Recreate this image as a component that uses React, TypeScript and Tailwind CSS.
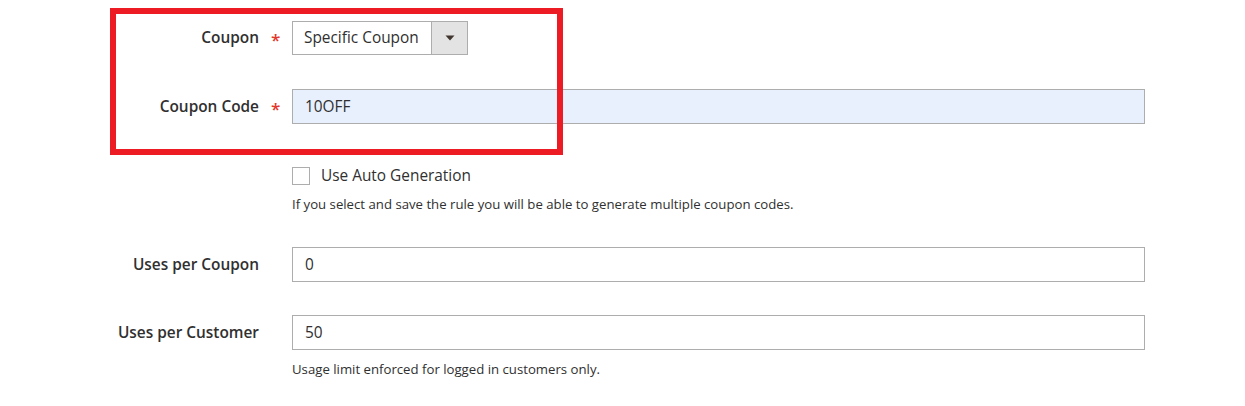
import React from "react";

type FieldRowProps = {
    label: string;
    required?: boolean;
    children: React.ReactNode;
    className?: string;
};

function FieldRow({ label, required, children, className = "" }: FieldRowProps) {
    return (
        <div className={`flex items-center ${className}`}>
            <div className="w-[259px] text-right text-[15.4px] font-semibold text-[#303030] shrink-0">
                {label}
            </div>
            <div className="w-[33px] shrink-0 pl-[12px] text-[17px] font-semibold text-[#e2372a] leading-none pt-[3px]">
                {required ? "*" : ""}
            </div>
            {children}
        </div>
    );
}

function TextInput({ value, autofill }: { value: string; autofill?: boolean }) {
    return (
        <input
            type="text"
            defaultValue={value}
            className={`w-[853px] h-[35px] border border-[#adadad] px-[12px] text-[15.4px] text-[#303030] outline-none ${
                autofill ? "bg-[#e8f0fe]" : "bg-white"
            }`}
        />
    );
}

export default function App() {
    return (
        <div
            className="relative w-[1245px] h-[406px] bg-white overflow-hidden"
            style={{ fontFamily: '"Open Sans", "Liberation Sans", sans-serif' }}
        >
            <div className="pt-[21px]">
                <FieldRow label="Coupon" required>
                    <div className="flex w-[176px] h-[34px] border border-[#adadad] bg-white">
                        <div className="flex-1 flex items-center pl-[11px] text-[15.4px] text-[#303030]">
                            Specific Coupon
                        </div>
                        <div className="w-[36px] flex items-center justify-center bg-[#e3e3e3] border-l border-[#adadad]">
                            <svg width="10" height="6" viewBox="0 0 10 6">
                                <path d="M0.5 0.5 L9.5 0.5 L5 5.5 Z" fill="#41362f" />
                            </svg>
                        </div>
                    </div>
                </FieldRow>

                <FieldRow label="Coupon Code" required className="mt-[34px]">
                    <TextInput value="10OFF" autofill />
                </FieldRow>

                <div className="pl-[292px] mt-[43px]">
                    <label className="flex items-center gap-[11px] h-[18px]">
                        <span className="w-[18px] h-[18px] border border-[#adadad] bg-white shrink-0" />
                        <span className="text-[15.4px] leading-[18px] text-[#303030]">Use Auto Generation</span>
                    </label>
                    <p className="mt-[10px] text-[13.2px] leading-[18px] text-[#303030]">
                        If you select and save the rule you will be able to generate multiple coupon codes.
                    </p>
                </div>

                <FieldRow label="Uses per Coupon" className="mt-[34px]">
                    <TextInput value="0" />
                </FieldRow>

                <FieldRow label="Uses per Customer" className="mt-[33px]">
                    <TextInput value="50" />
                </FieldRow>

                <p className="pl-[292px] mt-[10px] text-[13.2px] leading-[18px] text-[#303030]">
                    Usage limit enforced for logged in customers only.
                </p>
            </div>

            {/* annotation box */}
            <div className="absolute left-[110px] top-[8px] w-[453px] h-[147px] border-[6px] border-[#ed1c24] pointer-events-none" />
        </div>
    );
}
